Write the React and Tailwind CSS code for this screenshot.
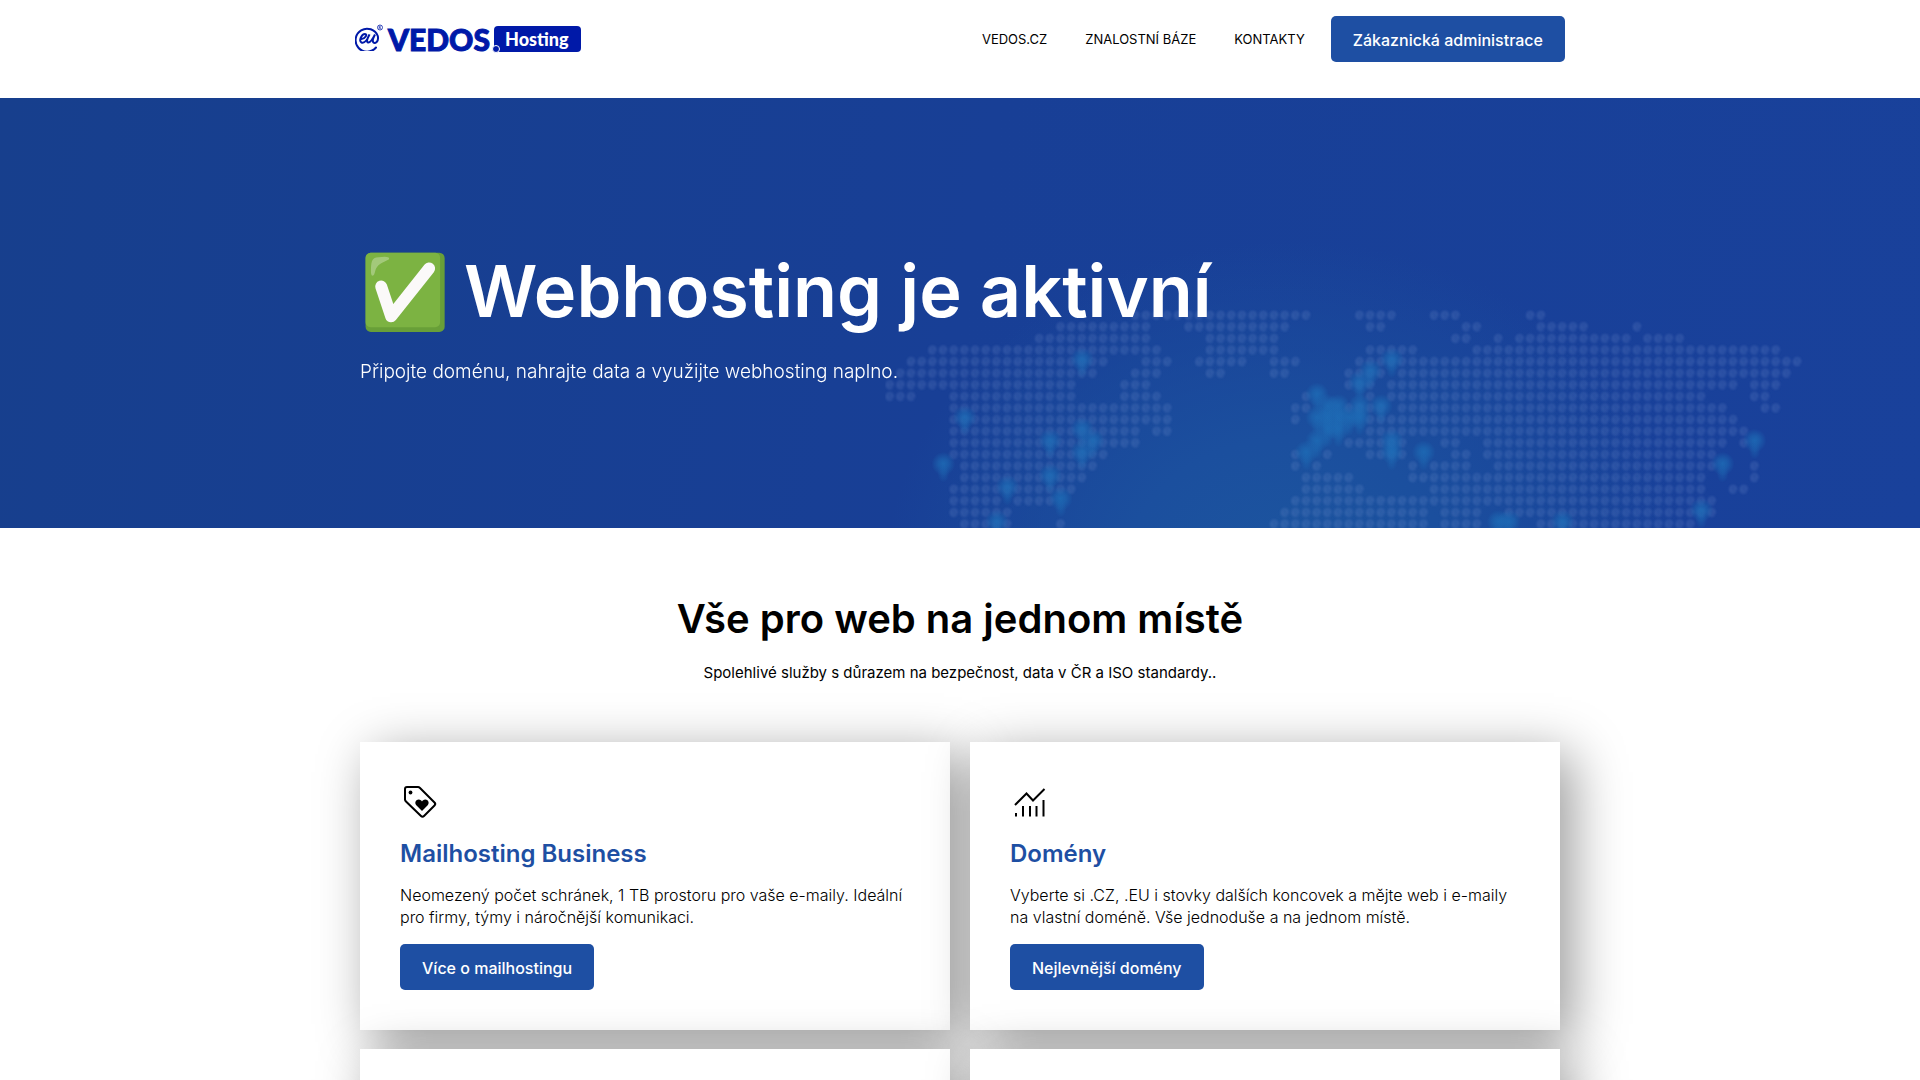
const MAP_ROWS = [
  [[23, 39], [44, 47], [51, 53], [60, 61]],
  [[16, 24], [28, 37], [45, 46], [54, 55], [61, 65], [70, 70]],
  [[14, 24], [30, 36], [53, 54], [57, 57], [59, 69], [71, 74]],
  [[4, 25], [30, 36], [45, 49], [55, 83]],
  [[2, 20], [24, 26], [29, 33], [36, 38], [44, 85]],
  [[1, 19], [23, 25], [30, 31], [36, 37], [43, 46], [48, 84]],
  [[0, 17], [22, 24], [43, 45], [47, 79], [81, 83]],
  [[0, 2], [6, 17], [22, 25], [39, 39], [45, 45], [47, 76], [81, 82]],
  [[6, 26], [38, 39], [43, 46], [48, 78], [82, 83]],
  [[6, 26], [38, 38], [45, 79]],
  [[6, 23], [25, 26], [45, 80]],
  [[6, 23], [43, 48], [52, 53], [56, 78], [80, 80]],
  [[6, 20], [38, 38], [41, 41], [45, 48], [53, 54], [56, 77]],
  [[7, 19], [38, 38], [40, 40], [49, 49], [51, 54], [57, 77], [81, 81]],
  [[7, 18], [39, 43], [49, 76], [81, 81]],
  [[6, 17], [39, 44], [51, 76], [79, 80]],
  [[6, 10], [12, 15], [38, 77]],
  [[6, 11], [37, 50], [52, 55], [58, 77]],
  [[7, 11], [16, 16], [36, 50], [52, 55], [61, 75]],
];

const MAP_POINTS = [
  [7, 9], [5, 13], [15, 11], [18, 10], [19, 11], [18, 12], [18, 4], [15, 14], [11, 15], [16, 16], [10, 18],
  [47, 4], [45, 5], [44, 6], [40, 7], [41, 8], [42, 8], [44, 8], [46, 8], [40, 9], [41, 9], [42, 9], [43, 9],
  [44, 9], [41, 10], [42, 10], [40, 11], [39, 12], [47, 11], [47, 12], [50, 12], [81, 11], [78, 13],
  [76, 17], [57, 18], [58, 18], [63, 18],
];

const PITCH_X = 10.675;
const PITCH_Y = 11.6;

function WorldMap() {
  const marks = MAP_ROWS.flatMap((ranges, row) =>
    ranges.flatMap(([from, to]) =>
      Array.from({ length: to - from + 1 }, (_, i) => [from + i, row])
    )
  );
  return (
    <svg className="absolute right-[111px] bottom-0 h-[220px] w-[924px]" viewBox="0 0 924 220" aria-hidden="true">
      <defs>
        <path id="mark" d="M-3 0.500H3C3-4.500-3.500-4.500-3.500 0S0 4.500 2.500 2.500" fill="#8fa4dc" fillOpacity="0.06" stroke="#8fa4dc" strokeOpacity="0.180" strokeWidth="2" />
        <radialGradient id="glow">
          <stop offset="0" stopColor="#1e6cb6" stopOpacity="0.850" />
          <stop offset="0.400" stopColor="#1e6cb6" stopOpacity="0.600" />
          <stop offset="1" stopColor="#1e6cb6" stopOpacity="0" />
        </radialGradient>
        <filter id="soft"><feGaussianBlur stdDeviation="1" /></filter>
      </defs>
      <g filter="url(#soft)">
        {marks.map(([c, r]) => (
          <use key={c + "-" + r} href="#mark" x={5 + c * PITCH_X} y={7 + r * PITCH_Y} />
        ))}
      </g>
      {MAP_POINTS.map(([c, r]) => (
        <g key={c + "-" + r} fill="url(#glow)">
          <circle cx={5 + c * PITCH_X} cy={5 + r * PITCH_Y} r="12" />
          <ellipse cx={5 + c * PITCH_X} cy={15 + r * PITCH_Y} rx="6" ry="9" opacity="0.500" />
        </g>
      ))}
    </svg>
  );
}

function Logo() {
  return (
    <a href="#" aria-label="VEDOS Hosting" className="flex h-[26px] items-center text-[#0019a8]">
      <svg viewBox="0 0 30 28" className="-mt-1 h-7 w-[30px]" fill="none" stroke="currentColor" aria-hidden="true">
        <path d="M21 24.500A11.500 11.500 0 1 1 22.800 13C24 19 20 21 18.500 19.500C16.500 17.500 19 13.500 20 11.500C17 17.500 15 20 13 19.500C10.500 18.500 13.500 13.500 14.500 11.500C12.500 16.500 9.500 20.500 6.500 19.500C3.500 18 6.500 11 10 11C13 11 10 16 6.500 16" strokeWidth="2" strokeLinecap="round" />
        <circle cx="25" cy="4.500" r="2.500" strokeWidth="0.800" />
        <path d="M24.200 6V3.300H25.200Q26.200 4 25.200 4.700H24.200M25 4.700L26 6" strokeWidth="0.600" />
      </svg>
      <span className="ml-[3px] font-['Lato'] text-[30px] leading-[26px] font-black [-webkit-text-stroke:1px_#0019a8]">VEDOS</span>
      <span className="relative ml-1 flex h-[26px] items-center rounded bg-[#0019a8] pr-3 pl-[11px] font-['Lato'] text-[18px] leading-5 font-black text-white">
        Hosting
        <span className="absolute -bottom-px -left-0.5 size-2 rounded-full border border-white bg-[#0019a8]" />
      </span>
    </a>
  );
}

function TagIcon() {
  return (
    <svg viewBox="0 0 40 40" className="size-10" aria-hidden="true">
      <path d="M5 7Q5 5 7 5H18Q19 5 20 6L34.500 20.500Q36 22 34.500 23.500L24 34Q22.500 35.500 21 34L6 19.500Q5 18.500 5 17.500Z" fill="none" stroke="#000" strokeWidth="2" strokeLinejoin="round" />
      <circle cx="10.500" cy="10.500" r="1.900" />
      <path d="M22 29L16.300 23.300C14.200 21 15.800 17.600 18.700 17.600C20.500 17.600 21.500 18.600 22 19.600C22.500 18.600 23.500 17.600 25.300 17.600C28.200 17.600 29.800 21 27.700 23.300Z" />
    </svg>
  );
}

function ChartIcon() {
  return (
    <svg viewBox="0 0 40 40" className="size-10" fill="none" stroke="#000" strokeWidth="2" aria-hidden="true">
      <path d="M5 23L16.500 11.500L23 18.500L34.500 7" />
      <path d="M6 31V34.500M13 24V34.500M20 24V34.500M26.500 24V34.500M33.500 18V34.500" />
    </svg>
  );
}

function Button({ children, className = "" }) {
  return (
    <a
      href="#"
      className={"inline-flex h-[46px] items-center rounded-[5px] bg-[#1e4fa3] px-[22px] pt-0.5 text-base leading-5 font-medium text-white " + className}
    >
      {children}
    </a>
  );
}

function Card({ icon, title, text, action }) {
  return (
    <article className="bg-white p-10 shadow-[12px_12px_50px_0_rgba(0,0,0,0.4)]">
      {icon}
      <h3 className="mt-[18px] text-[24px] leading-7 font-semibold text-[#1e4fa3]">{title}</h3>
      <p className="mt-4 text-base leading-[22px] font-light text-black">{text}</p>
      <Button className="mt-4">{action}</Button>
    </article>
  );
}

const CARDS = [
  {
    icon: <TagIcon />,
    title: "Mailhosting Business",
    text: "Neomezený počet schránek, 1 TB prostoru pro vaše e-maily. Ideální pro firmy, týmy i náročnější komunikaci.",
    action: "Více o mailhostingu",
  },
  {
    icon: <ChartIcon />,
    title: "Domény",
    text: "Vyberte si .CZ, .EU i stovky dalších koncovek a mějte web i e-maily na vlastní doméně. Vše jednoduše a na jednom místě.",
    action: "Nejlevnější domény",
  },
];

export default function App() {
  return (
    <div className="h-screen overflow-hidden bg-white font-['Inter',sans-serif] text-black">
      <header className="mx-auto flex max-w-[1210px] items-start justify-between pt-4 pb-9">
        <div className="pt-2.5">
          <Logo />
        </div>
        <nav className="flex items-center">
          <a href="#" className="px-[19px] pt-0.5 text-[13px]">VEDOS.CZ</a>
          <a href="#" className="px-[19px] pt-0.5 text-[13px]">ZNALOSTNÍ BÁZE</a>
          <a href="#" className="pr-[26px] pl-[19px] pt-0.5 text-[13px]">KONTAKTY</a>
          <Button>Zákaznická administrace</Button>
        </nav>
      </header>

      <section className="relative bg-[radial-gradient(ellipse_400px_330px_at_67%_110%,#1c559f_0%,#1b4f9e_40%,transparent_100%),linear-gradient(100deg,#173f8d_0%,#183f96_50%,#19419b_100%)]">
        <WorldMap />
        <div className="relative mx-auto max-w-[1200px] pt-[150px] pb-[143px] text-white">
          <h1 className="flex gap-[14px] text-[72px] leading-[86px] font-semibold">
            <span>✅</span>
            <span>Webhosting je aktivní</span>
          </h1>
          <p className="mt-6 text-[19px] leading-[27px] font-light">
            Připojte doménu, nahrajte data a využijte webhosting naplno.
          </p>
        </div>
      </section>

      <main className="mx-auto max-w-[1200px] pt-16">
        <h2 className="text-center text-[40px] leading-[54px] font-semibold">Vše pro web na jednom místě</h2>
        <p className="mt-4 text-center text-[15px] leading-[22px]">
          Spolehlivé služby s důrazem na bezpečnost, data v ČR a ISO standardy..
        </p>
        <div className="mt-[58px] grid grid-cols-2 gap-x-5 gap-y-[19px]">
          {CARDS.map((card) => (
            <Card key={card.title} {...card} />
          ))}
          <article className="h-[288px] bg-white shadow-[12px_12px_50px_0_rgba(0,0,0,0.4)]" />
          <article className="h-[288px] bg-white shadow-[12px_12px_50px_0_rgba(0,0,0,0.4)]" />
        </div>
      </main>
    </div>
  );
}
